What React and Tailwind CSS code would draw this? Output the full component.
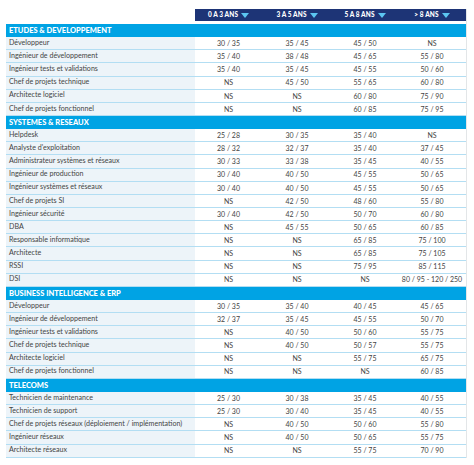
const sections = [
  {
    title: "ETUDES & DEVELOPPEMENT",
    rows: [
      ["Développeur", "30 / 35", "35 / 45", "45 / 50", "NS"],
      ["Ingénieur de développement", "35 / 40", "38 / 48", "45 / 65", "55 / 80"],
      ["Ingénieur tests et validations", "35 / 40", "35 / 45", "45 / 55", "50 / 60"],
      ["Chef de projets technique", "NS", "45 / 50", "55 / 65", "60 / 80"],
      ["Architecte logiciel", "NS", "NS", "60 / 80", "75 / 90"],
      ["Chef de projets fonctionnel", "NS", "NS", "60 / 85", "75 / 95"],
    ],
  },
  {
    title: "SYSTEMES & RESEAUX",
    rows: [
      ["Helpdesk", "25 / 28", "30 / 35", "35 / 40", "NS"],
      ["Analyste d'exploitation", "28 / 32", "32 / 37", "35 / 40", "37 / 45"],
      ["Administrateur systèmes et réseaux", "30 / 33", "33 / 38", "35 / 45", "40 / 55"],
      ["Ingénieur de production", "30 / 40", "40 / 50", "45 / 55", "50 / 65"],
      ["Ingénieur systèmes et réseaux", "30 / 40", "40 / 50", "45 / 55", "50 / 65"],
      ["Chef de projets SI", "NS", "42 / 50", "48 / 60", "55 / 80"],
      ["Ingénieur sécurité", "30 / 40", "42 / 50", "50 / 70", "60 / 80"],
      ["DBA", "NS", "45 / 55", "50 / 65", "60 / 85"],
      ["Responsable informatique", "NS", "NS", "65 / 85", "75 / 100"],
      ["Architecte", "NS", "NS", "65 / 85", "75 / 105"],
      ["RSSI", "NS", "NS", "75 / 95", "85 / 115"],
      ["DSI", "NS", "NS", "NS", "80 / 95 - 120 / 250"],
    ],
  },
  {
    title: "BUSINESS INTELLIGENCE & ERP",
    rows: [
      ["Développeur", "30 / 35", "35 / 40", "40 / 45", "45 / 65"],
      ["Ingénieur de développement", "32 / 37", "35 / 45", "45 / 55", "50 / 70"],
      ["Ingénieur tests et validations", "NS", "40 / 50", "50 / 60", "55 / 75"],
      ["Chef de projets technique", "NS", "40 / 50", "50 / 57", "55 / 75"],
      ["Architecte logiciel", "NS", "NS", "55 / 75", "65 / 75"],
      ["Chef de projets fonctionnel", "NS", "NS", "NS", "60 / 85"],
    ],
  },
  {
    title: "TELECOMS",
    rows: [
      ["Technicien de maintenance", "25 / 30", "30 / 38", "35 / 45", "40 / 55"],
      ["Technicien de support", "25 / 30", "30 / 40", "35 / 45", "40 / 55"],
      ["Chef de projets réseaux (déploiement / implémentation)", "NS", "40 / 50", "50 / 60", "55 / 80"],
      ["Ingénieur réseaux", "NS", "40 / 50", "50 / 65", "55 / 75"],
      ["Architecte réseaux", "NS", "NS", "55 / 75", "70 / 90"],
    ],
  },
]

const heads = ["0 A 3 ANS", "3 A 5 ANS", "5 A 8 ANS", "> 8 ANS"]

function Arrow() {
  return (
    <svg width="8" height="5" viewBox="0 0 8 5" className="ml-[3px]">
      <path d="M0 0 H8 L4 5 Z" fill="#5cc6f2" />
    </svg>
  )
}

export default function App() {
  return (
    <div className="w-[474px] h-[465px] bg-white pt-[9px] pl-[6px] font-['Lato',sans-serif] text-[#444444]">
      <div className="w-[461px] border-r border-[#e3e6e8]">
        <div className="grid grid-cols-[189px_67px_70px_66px_68px] h-[12px]">
          <div className="bg-white" />
          {heads.map((h) => (
            <div key={h} className="bg-[#1d3476] flex items-center justify-center text-white text-[6.5px] font-black tracking-[0.1px]">
              {h}
              <Arrow />
            </div>
          ))}
        </div>
        <div className="h-[3px]" />
        {sections.map((s) => (
          <div key={s.title}>
            <div className="h-[13.15px] bg-[#00a3e4] flex items-center pl-[3px] text-white text-[7.5px] font-black">
              {s.title}
            </div>
            {s.rows.map((r, i) => (
              <div key={i} className="grid grid-cols-[189px_67px_70px_66px_68px] h-[13.15px] border-b border-[#b3def3] text-[7px]">
                <div className="bg-[#edf4f9] flex items-center pl-[3px] whitespace-nowrap text-[7.1px]">{r[0]}</div>
                {r.slice(1).map((v, j) => (
                  <div key={j} className="flex items-center justify-center whitespace-nowrap">{v}</div>
                ))}
              </div>
            ))}
          </div>
        ))}
      </div>
    </div>
  )
}
